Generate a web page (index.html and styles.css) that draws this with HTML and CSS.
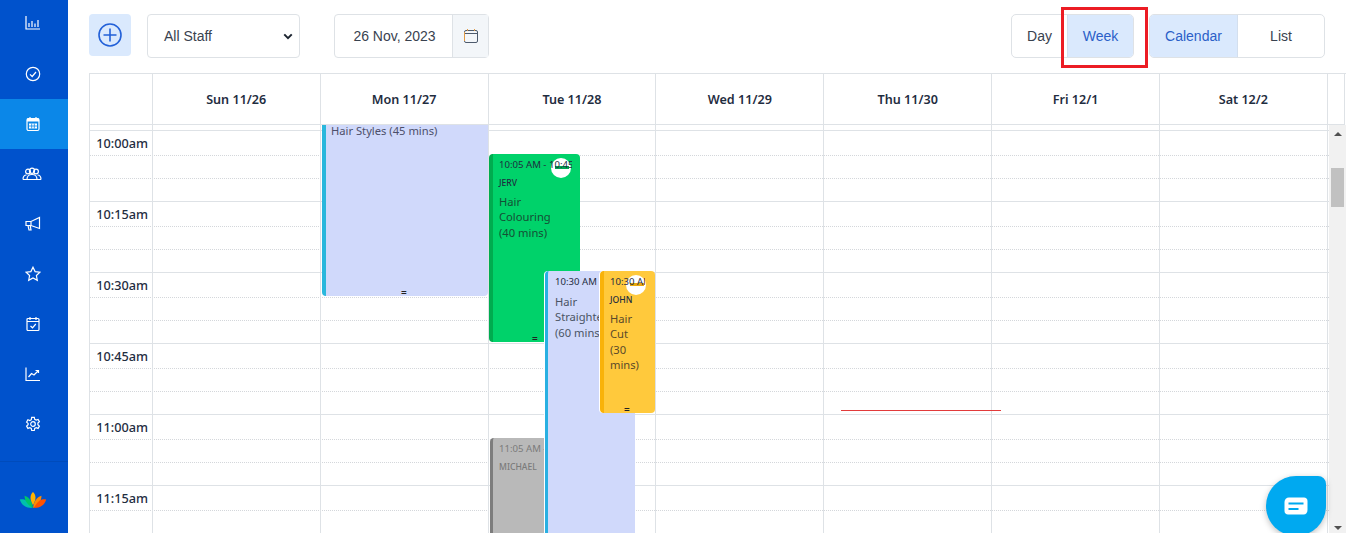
FILE: index.html
```html
<!DOCTYPE html>
<html lang="en">
<head>
    <meta charset="UTF-8">
    <title>Calendar</title>
    <link rel="stylesheet" href="styles.css">
</head>
<body>
    <aside class="sidebar">
        <nav class="side-nav">
            <a class="side-item side-first"><svg viewBox="0 0 16 16"><path d="M1 1v13h14M4 12V8M7 12V6M10 12V8.500M13 12V5"/></svg></a>
            <a class="side-item"><svg viewBox="0 0 16 16"><circle cx="8" cy="8" r="6.700"/><path d="M5 8.300l2.200 2.200L11 6"/></svg></a>
            <a class="side-item active"><svg viewBox="0 0 16 16"><rect x="2" y="2.500" width="12" height="12" rx="1.500"/><path d="M5 1v3M11 1v3"/><path class="solid" d="M2 2.500h12v3H2zM4 7.500h8v5H4z"/><path class="gap" d="M6.700 7.500v5M9.300 7.500v5M4 10h8"/></svg></a>
            <a class="side-item side-wide"><svg viewBox="0 0 20 14"><circle cx="6" cy="4.500" r="2.400"/><circle cx="10" cy="3.800" r="2.600"/><circle cx="14" cy="4.500" r="2.400"/><path d="M1 12.500c0-3 1.500-4.500 3.500-4.500M19 12.500c0-3-1.500-4.500-3.500-4.500M5 12.500c0-3 2-5 5-5s5 2 5 5zM1 12.500h4M15 12.500h4"/></svg></a>
            <a class="side-item"><svg viewBox="0 0 16 16"><path d="M1 5.500h5L14.500 1.500v11L6 9.500H1zM6 5.500v4M3 9.500l1 4.500h2l-.8-4.500"/></svg></a>
            <a class="side-item"><svg viewBox="0 0 16 16"><path d="M8 1.200l2.100 4.400 4.800.6-3.500 3.300.9 4.800L8 11.900l-4.300 2.400.9-4.800L1.100 6.200l4.800-.6z"/></svg></a>
            <a class="side-item"><svg viewBox="0 0 16 16"><rect x="2" y="2.500" width="12" height="12" rx="1"/><path d="M5 1v3M11 1v3M2 5.500h12M5.500 10l2 1.800L10.800 8"/></svg></a>
            <a class="side-item"><svg viewBox="0 0 16 16"><path d="M1 1.500v13h14M3.500 11l3-3.500 2.500 1.500L13 5M10.500 4.500H13.500V7"/></svg></a>
            <a class="side-item"><svg viewBox="0 0 16 16"><circle cx="8" cy="8" r="2.300"/><path d="M6.700 1.300h2.600l.4 2 1.500.8 1.900-.7 1.300 2.300-1.500 1.300v1.800l1.500 1.300-1.300 2.300-1.900-.7-1.500.8-.4 2H6.700l-.4-2-1.500-.8-1.900.7-1.300-2.300 1.500-1.300V7.400L1.600 6.100l1.300-2.300 1.900.7 1.500-.8z"/></svg></a>
        </nav>
        <div class="side-footer">
            <svg class="lotus" viewBox="0 0 28 18">
                <path fill="#00bfae" d="M0 8c5-1 9 1 13 9C6 17 2 14 0 8z"/>
                <path fill="#00c46a" d="M5 4c4 1 8 5 9 13C9 14 5 10 5 4z"/>
                <path fill="#ffb300" d="M14 0c3 3 4 7 0 14c-4-7-3-11 0-14z"/>
                <path fill="#ff8a00" d="M23 4c-4 1-8 5-9 13c5-3 9-7 9-13z"/>
                <path fill="#ff5200" d="M28 8c-5-1-9 1-13 9c7 0 11-3 13-9z"/>
            </svg>
        </div>
    </aside>

    <main class="content">
        <div class="toolbar">
            <button class="add-btn">
                <svg viewBox="0 0 24 24"><circle cx="12" cy="12" r="11"/><path d="M12 5.500v13M5.500 12h13"/></svg>
            </button>
            <div class="staff-select">
                <span>All Staff</span>
                <svg viewBox="0 0 12 8"><path d="M1.500 1.500L6 6l4.500-4.500"/></svg>
            </div>
            <div class="date-box">
                <span class="date-text">26 Nov, 2023</span>
                <span class="date-icon">
                    <svg viewBox="0 0 14 14"><rect x=".5" y="1.500" width="13" height="12" rx="1.500"/><path d="M.5 4.500h13"/><path class="tick-mark" d="M3.500 0v2M10.500 0v2M.5 3v9"/></svg>
                </span>
            </div>
            <div class="toolbar-right">
                <div class="btn-group view-range">
                    <span class="btn-seg">Day</span>
                    <span class="btn-seg selected">Week</span>
                </div>
                <div class="btn-group view-mode">
                    <span class="btn-seg selected">Calendar</span>
                    <span class="btn-seg">List</span>
                </div>
            </div>
        </div>

        <section class="calendar">
            <div class="cal-head">
                <div class="head-cell"></div>
                <div class="head-cell">Sun 11/26</div>
                <div class="head-cell">Mon 11/27</div>
                <div class="head-cell">Tue 11/28</div>
                <div class="head-cell">Wed 11/29</div>
                <div class="head-cell">Thu 11/30</div>
                <div class="head-cell">Fri 12/1</div>
                <div class="head-cell">Sat 12/2</div>
                <div class="head-cell"></div>
            </div>
            <div class="cal-body">
                <div class="timeline">
                    <div class="lead-row"></div>
                    <div class="hour-row"><div class="slot"><span class="time-label">10:00am</span></div><div class="slot"></div><div class="slot"></div></div>
                    <div class="hour-row"><div class="slot"><span class="time-label">10:15am</span></div><div class="slot"></div><div class="slot"></div></div>
                    <div class="hour-row"><div class="slot"><span class="time-label">10:30am</span></div><div class="slot"></div><div class="slot"></div></div>
                    <div class="hour-row"><div class="slot"><span class="time-label">10:45am</span></div><div class="slot"></div><div class="slot"></div></div>
                    <div class="hour-row"><div class="slot"><span class="time-label">11:00am</span></div><div class="slot"></div><div class="slot"></div></div>
                    <div class="hour-row"><div class="slot"><span class="time-label">11:15am</span></div><div class="slot"></div><div class="slot"></div></div>

                    <div class="col-lines">
                        <i></i><i></i><i></i><i></i><i></i><i></i><i></i><i></i><i></i>
                    </div>

                    <div class="event ev-mon">
                        <div class="ev-title">Hair Styles (45 mins)</div>
                        <span class="ev-grip">=</span>
                    </div>
                    <div class="event ev-green">
                        <div class="ev-time">10:05 AM - 10:45 AM</div>
                        <div class="ev-staff">JERV</div>
                        <div class="ev-title">Hair Colouring (40 mins)</div>
                        <span class="ev-badge"></span>
                        <span class="ev-grip">=</span>
                    </div>
                    <div class="event ev-gray">
                        <div class="ev-time">11:05 AM - 11:45 AM</div>
                        <div class="ev-staff">MICHAEL</div>
                    </div>
                    <div class="event ev-blue">
                        <div class="ev-time">10:30 AM - 11:30 AM</div>
                        <div class="ev-title">Hair Straightening (60 mins)</div>
                    </div>
                    <div class="event ev-yellow">
                        <div class="ev-time">10:30 AM - 11:00 AM</div>
                        <div class="ev-staff">JOHN</div>
                        <div class="ev-title">Hair Cut (30 mins)</div>
                        <span class="ev-badge"></span>
                        <span class="ev-grip">=</span>
                    </div>
                    <div class="now-line"></div>
                </div>
                <div class="scrollbar">
                    <span class="arrow-up"></span>
                    <span class="thumb"></span>
                    <span class="arrow-down"></span>
                </div>
            </div>
        </section>

        <div class="mark-box"></div>
    </main>

    <button class="chat-btn">
        <svg viewBox="0 0 24 18"><path class="chat-shape" d="M5 .5h15c2 0 3.500 1.500 3.500 3.500v9c0 2.500-1.500 4.500-4 4.500H4c-2 0-3.500-1.500-3.500-3.500V5C.5 2.500 2.500.5 5 .5z"/><path class="chat-lines" d="M4.500 6.500h15M4.500 12h10"/></svg>
    </button>
</body>
</html>
```

FILE: styles.css
```css
* {
    box-sizing: border-box;
    margin: 0;
    padding: 0;
}

html, body {
    height: 533px;
    overflow: hidden;
}

body {
    display: flex;
    background: #fff;
    color: #212b3a;
    font-family: "Liberation Sans", sans-serif;
}

/* sidebar */
.sidebar {
    width: 68px;
    flex-shrink: 0;
    display: flex;
    flex-direction: column;
    background: #0052cc;
}

.side-nav {
    height: 462px;
    margin-top: -1px;
}

.side-item {
    height: 50px;
    display: flex;
    align-items: center;
    justify-content: center;
}

.side-item.active {
    background: #0b87e8;
}

.side-item svg {
    width: 16px;
    height: 16px;
    fill: none;
    stroke: #fff;
    stroke-width: 1.2;
    margin-left: -2px;
}

.side-item.side-first svg {
    margin-top: -2px;
}

.side-item.side-wide svg {
    width: 20px;
    height: 14px;
    margin-left: -4px;
}

.side-item svg .solid {
    fill: #fff;
    stroke: none;
}

.side-item svg .gap {
    stroke: #0b87e8;
    stroke-width: .8;
}

.side-footer {
    flex: 1;
    border-top: 1px solid #004bbb;
    display: flex;
    justify-content: center;
    padding: 30px 3px 0 0;
}

.lotus {
    width: 28px;
    height: 17px;
}

/* main area */
.content {
    flex: 1;
    min-width: 0;
    position: relative;
    padding: 14px 0 0 21px;
    overflow: hidden;
}

.toolbar {
    display: flex;
    align-items: flex-start;
    height: 44px;
    margin-bottom: 15px;
    padding-right: 21px;
}

.add-btn {
    width: 42px;
    height: 42px;
    border: none;
    border-radius: 4px;
    background: #dae9fd;
    display: flex;
    align-items: center;
    justify-content: center;
    margin-right: 16px;
}

.add-btn svg {
    width: 24px;
    height: 24px;
    fill: none;
    stroke: #2260d8;
    stroke-width: 1.6;
}

.staff-select {
    width: 153px;
    height: 44px;
    border: 1px solid #dee2e6;
    border-radius: 4px;
    display: flex;
    align-items: center;
    justify-content: space-between;
    padding: 0 6px 0 16px;
    font-size: 14px;
    color: #39424f;
    margin-right: 34px;
}

.staff-select svg {
    width: 10px;
    height: 7px;
    fill: none;
    stroke: #1c2430;
    stroke-width: 2.4;
}

.date-box {
    width: 155px;
    height: 44px;
    border: 1px solid #dee2e6;
    border-radius: 4px;
    display: flex;
    font-size: 14px;
    color: #39424f;
}

.date-text {
    flex: 1;
    display: flex;
    align-items: center;
    justify-content: center;
    padding-left: 2px;
}

.date-icon {
    width: 36px;
    background: #f3f6f9;
    border-left: 1px solid #dee2e6;
    display: flex;
    align-items: center;
    justify-content: center;
}

.date-icon svg {
    width: 14px;
    height: 14px;
    fill: none;
    stroke: #4d5a6c;
    stroke-width: 1;
}

.date-icon svg .tick-mark {
    stroke: #e09a45;
}

.toolbar-right {
    margin-left: auto;
    display: flex;
    gap: 15px;
}

.btn-group {
    display: flex;
    height: 44px;
    border: 1px solid #dee2e6;
    border-radius: 5px;
    overflow: hidden;
    font-size: 14px;
    color: #39424f;
}

.btn-seg {
    display: flex;
    align-items: center;
    justify-content: center;
}

.btn-seg.selected {
    background: #dae9fd;
    color: #2b5fc8;
}

.view-range .btn-seg:first-child { width: 55px; }
.view-range .btn-seg:last-child { width: 66px; border-left: 1px solid #d3dfee; }
.view-mode .btn-seg:first-child { width: 88px; border-right: 1px solid #d3dfee; }
.view-mode .btn-seg:last-child { width: 86px; }

.mark-box {
    position: absolute;
    left: 993px;
    top: 7px;
    width: 87px;
    height: 61px;
    border: 3px solid #ec1c24;
}

/* calendar */
.calendar {
    border-top: 1px solid #dee2e6;
    border-left: 1px solid #dee2e6;
    font-family: "Noto Sans", sans-serif;
}

.cal-head {
    display: grid;
    grid-template-columns: 61.8px repeat(7, 167.86px) 1fr;
    height: 51px;
    border-bottom: 1px solid #dee2e6;
    border-right: 1px solid #dee2e6;
    margin-right: 1px;
}

.head-cell {
    display: flex;
    align-items: center;
    justify-content: center;
    font-size: 12.6px;
    font-weight: 600;
    color: #1f2d3f;
}

.head-cell + .head-cell {
    border-left: 1px solid #dee2e6;
}

.cal-body {
    display: flex;
    height: 410px;
}

.timeline {
    position: relative;
    flex: 1;
    overflow: hidden;
}

.lead-row {
    height: 5px;
}

.hour-row {
    height: 71px;
    border-top: 1px solid #dee2e6;
}

.slot {
    height: 23px;
    border-bottom: 1px dotted #d4d7db;
}

.slot:first-child {
    height: 25px;
}

.slot:last-child {
    height: 22px;
    border-bottom: none;
}

.time-label {
    display: block;
    width: 58px;
    padding-top: 3px;
    text-align: right;
    font-size: 12.7px;
    font-weight: 500;
    line-height: 18px;
    color: #1f2d3f;
}

.col-lines {
    position: absolute;
    inset: 0;
    display: grid;
    grid-template-columns: 61.8px repeat(7, 167.86px) 1fr;
}

.col-lines i + i {
    border-left: 1px solid #dee2e6;
}

.scrollbar {
    width: 17px;
    background: #f1f1f1;
    position: relative;
}

.thumb {
    position: absolute;
    left: 2px;
    top: 43px;
    width: 13px;
    height: 39px;
    background: #c1c1c1;
}

.arrow-up, .arrow-down {
    position: absolute;
    left: 5px;
    border-left: 4px solid transparent;
    border-right: 4px solid transparent;
}

.arrow-up {
    top: 7px;
    border-bottom: 4px solid #505050;
}

.arrow-down {
    top: 401px;
    border-top: 4px solid #505050;
}

/* appointments */
.event {
    position: absolute;
    isolation: isolate;
    overflow: hidden;
    border-radius: 4px;
    padding: 0 0 0 5px;
    font-size: 11.2px;
    line-height: 15.4px;
    color: #3b4654;
}

.ev-time {
    position: relative;
    z-index: 1;
    white-space: nowrap;
    overflow: hidden;
    font-size: 9.6px;
    line-height: 14px;
    margin-top: 4px;
    color: #1f2d3f;
}

.ev-staff {
    font-size: 8.6px;
    line-height: 12px;
    font-weight: 500;
    margin-top: 5px;
    color: #1f2d3f;
}

.ev-title {
    margin-top: 5px;
}

.ev-grip {
    position: absolute;
    bottom: -2px;
    font-size: 10px;
    font-weight: 600;
    line-height: 12px;
    color: #222;
}

.ev-badge {
    position: absolute;
    top: 4px;
    width: 20px;
    height: 20px;
    border-radius: 50%;
    background: #fff;
}

.ev-badge::after {
    content: "";
    position: absolute;
    left: 4px;
    top: 8px;
    width: 14px;
    height: 3px;
}

.ev-mon {
    left: 232px;
    top: -5px;
    width: 166px;
    height: 176px;
    background: #d0d9fb;
    border-left: 4px solid #29b7dc;
    padding-left: 5px;
    border-radius: 0 0 4px 4px;
}

.ev-mon .ev-title {
    margin-top: 3px;
    color: #4c4f6a;
}

.ev-mon .ev-grip {
    left: 75px;
}

.ev-green {
    left: 399px;
    top: 29px;
    width: 91px;
    height: 188px;
    background: #00d26a;
    border-left: 4px solid #00ac4f;
    padding-left: 6px;
    color: #154f35;
}

.ev-green .ev-time {
    width: 73px;
}

.ev-green .ev-badge {
    left: 58px;
}

.ev-green .ev-badge::after {
    background: #00a651;
}

.ev-green .ev-grip {
    left: 39px;
}

.ev-green .ev-title { width: 60px; }

.ev-blue {
    left: 455px;
    top: 146px;
    width: 90px;
    height: 300px;
    background: #d0d9fb;
    border-left: 3px solid #29b0e2;
    box-shadow: -1px 0 0 #fff;
    padding-left: 7px;
    border-radius: 4px 4px 0 0;
}

.ev-blue .ev-title {
    width: 60px;
    margin-top: 5px;
    color: #4a5464;
}

.ev-yellow {
    left: 510px;
    top: 146px;
    width: 55px;
    height: 142px;
    background: #ffc93c;
    border-left: 4px solid #f9b209;
    box-shadow: -1px 0 0 #fff;
    padding-left: 6px;
    color: #5a4a2a;
}

.ev-yellow .ev-time {
    width: 35px;
}

.ev-yellow .ev-badge {
    left: 22px;
}

.ev-yellow .ev-badge::after {
    background: #eaa90d;
}

.ev-yellow .ev-grip {
    left: 20px;
}

.ev-yellow .ev-staff {
    margin-top: 5px;
}

.ev-yellow .ev-title {
    width: 36px;
    margin-top: 5px;
}

.ev-gray {
    left: 400px;
    top: 313px;
    width: 60px;
    height: 120px;
    background: #b9b9b9;
    border-left: 3px solid #7d7d7d;
    padding-left: 6px;
}

.ev-gray .ev-time,
.ev-gray .ev-staff {
    color: #7b7b7b;
}

.now-line {
    position: absolute;
    left: 751px;
    top: 285px;
    width: 160px;
    height: 1px;
    background: #e23b3b;
}

/* chat */
.chat-btn {
    position: absolute;
    left: 1266px;
    top: 476px;
    width: 60px;
    height: 60px;
    border: none;
    border-radius: 50% 8px 50% 50%;
    background: #00a9f0;
    box-shadow: 0 2px 6px rgba(0, 0, 0, .25);
    display: flex;
    align-items: center;
    justify-content: center;
}

.chat-btn svg {
    width: 24px;
    height: 18px;
}

.chat-shape {
    fill: #fff;
}

.chat-lines {
    fill: none;
    stroke: #00a9f0;
    stroke-width: 2;
}
```
